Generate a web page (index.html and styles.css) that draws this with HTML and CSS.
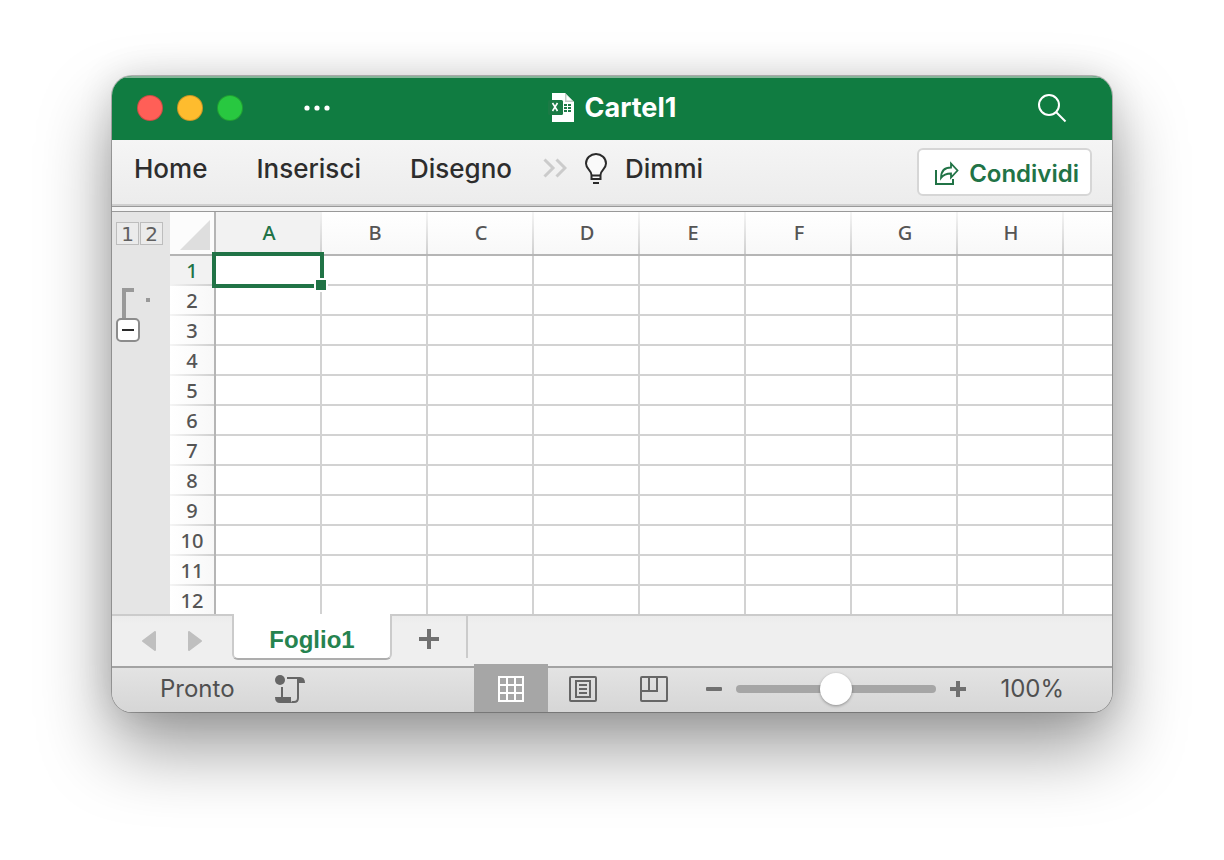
FILE: index.html
```html
<!DOCTYPE html>
<html lang="it">
<head>
    <meta charset="UTF-8">
    <meta name="viewport" content="width=device-width, initial-scale=1.0">
    <title>Cartel1</title>
    <link rel="stylesheet" href="styles.css">
</head>
<body>

<div class="window">

    <header class="titlebar">
        <div class="title-left">
            <button class="light red" aria-label="Chiudi"></button>
            <button class="light yellow" aria-label="Riduci"></button>
            <button class="light green" aria-label="Ingrandisci"></button>
            <button class="more" aria-label="Altro">
                <svg width="26" height="6" viewBox="0 0 26 6" fill="#fff"><circle cx="3" cy="3" r="2.6"/><circle cx="13" cy="3" r="2.6"/><circle cx="23" cy="3" r="2.6"/></svg>
            </button>
        </div>
        <h1 class="title">
            <svg width="28" height="30" viewBox="0 0 28 30">
                <path d="M4 0h13l9 9v20H4z" fill="#fff"/>
                <path d="M17 0v9h9z" fill="#c3cbc6"/>
                <path d="M18.500 2v5.500H24z" fill="#fff"/>
                <path d="M16 11h3v2h-3zM20 11h3v2h-3zM16 14h3v2h-3zM20 14h3v2h-3zM16 17h3v2h-3zM20 17h3v2h-3z" fill="#1f7a48"/>
                <rect x="0" y="7" width="15" height="15" rx="1.500" fill="#1b7a45"/>
                <path d="M4.500 10l5 8M9.500 10l-5 8" stroke="#fff" stroke-width="1.600" fill="none"/>
            </svg>
            Cartel1
        </h1>
        <button class="search" aria-label="Cerca">
            <svg width="30" height="30" viewBox="0 0 30 30" fill="none" stroke="#fff" stroke-width="2"><circle cx="12" cy="12" r="10"/><path d="M19 19l9.500 9.500"/></svg>
        </button>
    </header>

    <nav class="ribbon">
        <a href="#">Home</a>
        <a href="#">Inserisci</a>
        <a href="#">Disegno</a>
        <button class="overflow" aria-label="Altre schede">
            <svg width="24" height="20" viewBox="0 0 24 20" fill="none" stroke="#cbcbcb" stroke-width="3"><path d="M1.500 1.500l8.500 8.500-8.500 8.500M13.500 1.500L22 10l-8.500 8.500"/></svg>
        </button>
        <a href="#" class="tell-me">
            <svg width="22" height="32" viewBox="0 0 22 32" fill="none" stroke="#2b2b2b" stroke-width="2">
                <path d="M6.500 22c0-5-5.500-6-5.500-11.500a10 9.500 0 0 1 20 0C21 16 15.500 17 15.500 22v4h-9z" fill="#fafafa"/>
                <path d="M6.500 22.500h9M8 30h6"/>
            </svg>
            Dimmi
        </a>
        <button class="share">
            <svg width="26" height="26" viewBox="0 0 26 26" fill="none" stroke="#217346" stroke-width="2">
                <path d="M2 9v14h17v-5"/>
                <path d="M7 17c0-7 4-10.500 10-10.500V2.500l6.500 7-6.500 7v-4c-4.500 0-7.500 1-10 4.500z" stroke-width="1.800"/>
            </svg>
            Condividi
        </button>
    </nav>

    <main class="workbook">
        <aside class="outline">
            <div class="levels">
                <button>1</button>
                <button>2</button>
            </div>
            <div class="group">
                <span class="bracket"></span>
                <span class="dot"></span>
            </div>
            <button class="collapse" aria-label="Comprimi gruppo"><svg width="12" height="2" viewBox="0 0 12 2"><path d="M0 0h12v2H0z" fill="#2b2b2b"/></svg></button>
        </aside>
        <div class="sheet">
            <table>
                <thead>
                    <tr>
                        <th class="corner"><svg width="30" height="30" viewBox="0 0 30 30"><path d="M30 0v30H0z" fill="#dedede"/></svg></th>
                        <th class="active">A</th><th>B</th><th>C</th><th>D</th><th>E</th><th>F</th><th>G</th><th>H</th><th class="rest"></th>
                    </tr>
                </thead>
                <tbody>
                    <tr><th class="active">1</th><td class="selected"><span class="cursor"></span></td><td></td><td></td><td></td><td></td><td></td><td></td><td></td><td></td></tr>
                    <tr><th>2</th><td></td><td></td><td></td><td></td><td></td><td></td><td></td><td></td><td></td></tr>
                    <tr><th>3</th><td></td><td></td><td></td><td></td><td></td><td></td><td></td><td></td><td></td></tr>
                    <tr><th>4</th><td></td><td></td><td></td><td></td><td></td><td></td><td></td><td></td><td></td></tr>
                    <tr><th>5</th><td></td><td></td><td></td><td></td><td></td><td></td><td></td><td></td><td></td></tr>
                    <tr><th>6</th><td></td><td></td><td></td><td></td><td></td><td></td><td></td><td></td><td></td></tr>
                    <tr><th>7</th><td></td><td></td><td></td><td></td><td></td><td></td><td></td><td></td><td></td></tr>
                    <tr><th>8</th><td></td><td></td><td></td><td></td><td></td><td></td><td></td><td></td><td></td></tr>
                    <tr><th>9</th><td></td><td></td><td></td><td></td><td></td><td></td><td></td><td></td><td></td></tr>
                    <tr><th>10</th><td></td><td></td><td></td><td></td><td></td><td></td><td></td><td></td><td></td></tr>
                    <tr><th>11</th><td></td><td></td><td></td><td></td><td></td><td></td><td></td><td></td><td></td></tr>
                    <tr><th>12</th><td></td><td></td><td></td><td></td><td></td><td></td><td></td><td></td><td></td></tr>
                </tbody>
            </table>
        </div>
    </main>

    <div class="tabs">
        <button class="arrow" aria-label="Foglio precedente"><svg width="14" height="20" viewBox="0 0 14 20"><path d="M13 1v18L1 10z" fill="#bfbfbf" stroke="#bfbfbf" stroke-width="2" stroke-linejoin="round"/></svg></button>
        <button class="arrow" aria-label="Foglio successivo"><svg width="14" height="20" viewBox="0 0 14 20"><path d="M1 1v18l12-9z" fill="#bfbfbf" stroke="#bfbfbf" stroke-width="2" stroke-linejoin="round"/></svg></button>
        <button class="tab">Foglio1</button>
        <button class="add" aria-label="Nuovo foglio"><svg width="20" height="20" viewBox="0 0 20 20"><path d="M8 0h4v8h8v4h-8v8H8v-8H0V8h8z" fill="#707070"/></svg></button>
    </div>

    <footer class="status">
        <span class="ready">Pronto</span>
        <button class="macro" aria-label="Registra macro">
            <svg width="30" height="28" viewBox="0 0 30 28" fill="#666">
                <circle cx="5" cy="5" r="5"/>
                <path d="M6 12h2v11H6z"/>
                <path d="M0 22h16v3q0 3 3 3H5q-5 0-5-6z"/>
                <path d="M12 2h13q5 0 5 6h-6V4H12z"/>
                <path d="M23 4v19q0 4-4 4h-2" fill="none" stroke="#666" stroke-width="2"/>
            </svg>
        </button>
        <div class="views">
            <button class="current" aria-label="Normale">
                <svg width="26" height="26" viewBox="0 0 26 26"><path d="M1 1h24v24H1zM9 1v24M17 1v24M1 9h24M1 17h24" fill="none" stroke="#fff" stroke-width="2"/></svg>
            </button>
            <button aria-label="Layout di pagina">
                <svg width="28" height="26" viewBox="0 0 28 26" fill="none" stroke="#666" stroke-width="2"><rect x="1" y="1" width="26" height="24" rx="1"/><path d="M7 5h14v16H7zM10 9h8M10 13h8M10 17h8"/></svg>
            </button>
            <button aria-label="Anteprima interruzioni">
                <svg width="28" height="26" viewBox="0 0 28 26" fill="none" stroke="#666" stroke-width="2"><rect x="1" y="1" width="26" height="24" rx="1"/><path d="M9 1v14M17 1v14H1"/></svg>
            </button>
        </div>
        <div class="zoom">
            <button aria-label="Riduci zoom"><svg width="16" height="16" viewBox="0 0 16 16"><rect y="6" width="16" height="4" rx="1" fill="#707070"/></svg></button>
            <input type="range" min="0" max="200" value="100" aria-label="Zoom">
            <button aria-label="Aumenta zoom"><svg width="16" height="16" viewBox="0 0 16 16"><path d="M6 0h4v6h6v4h-6v6H6v-6H0V6h6z" fill="#707070"/></svg></button>
            <span class="percent">100%</span>
        </div>
    </footer>

</div>

</body>
</html>
```

FILE: styles.css
```css
* {box-sizing: border-box;}
body {
    margin: 0;
    min-height: 100vh;
    padding: 76px 112px;
    background: #fff;
    font-family: Inter, "Liberation Sans", sans-serif;
    color: #2d2d2d;
}
button {
    margin: 0;
    padding: 0;
    border: 0;
    background: none;
    font: inherit;
    color: inherit;
}
svg {display: block; flex: none;}
a {color: inherit; text-decoration: none;}

.window {
    border-radius: 20px;
    overflow: hidden;
    background: #efefef;
    box-shadow: 0 0 0 1px rgba(0,0,0,.25), 0 36px 72px rgba(0,0,0,.4), 0 0 36px rgba(0,0,0,.12);
}

/* title bar */
.titlebar {
    display: grid;
    grid-template-columns: 1fr auto 1fr;
    align-items: center;
    height: 64px;
    padding: 0 26px 2px;
    border-top: 2px solid #86b599;
    background: #107c41;
}
.title-left {display: flex; align-items: center; gap: 16px;}
.light {width: 26px; height: 26px; margin: 0 -1px; border-radius: 50%; border: 1px solid rgba(0,0,0,.2);}
.red {background: #ff5f57;}
.yellow {background: #febc2e;}
.green {background: #28c840;}
.more {margin-left: 46px;}
.title {
    display: flex;
    align-items: center;
    gap: 9px;
    margin: 0;
    font-size: 27px;
    line-height: 32px;
    font-weight: 700;
    color: #fff;
}
.search {justify-self: end; margin-right: 19px;}

/* ribbon */
.ribbon {
    display: flex;
    align-items: flex-start;
    height: 72px;
    padding: 8px 20px 0 22px;
    border-bottom: 1px solid #999;
    background: linear-gradient(#cfcfcf 0 2px, #999 2px 3px, #f5f5f5 3px) 0 100% / 100% 7px no-repeat, linear-gradient(#f5f5f5, #ebebeb);
    font-size: 26px;
    line-height: 42px;
    font-weight: 500;
}
.ribbon a {margin-right: 49px;}
.overflow {margin: 10px 18px 0 -18px;}
.ribbon .tell-me {display: flex; align-items: center; gap: 18px; margin-right: auto;}
.share {
    display: flex;
    align-items: center;
    gap: 9px;
    height: 48px;
    padding: 3px 11px 0 15px;
    border: 2px solid #d6d6d6;
    border-radius: 6px;
    background: #fff;
    color: #217346;
    font-size: 24px;
    font-weight: 600;
}

/* grid */
.workbook {display: flex; height: 402px; background: #fff;}
.outline {flex: none; width: 58px; padding: 10px 4px; background: #e5e5e5;}
.levels {display: flex; gap: 1px;}
.levels button {
    width: 23px;
    height: 23px;
    border: 1px solid #bdbdbd;
    background: #ebebeb;
    color: #606060;
    font: 20px/20px "DejaVu Sans", sans-serif;
}
.group {display: flex; gap: 12px; margin: 43px 0 0 6px;}
.bracket {width: 12px; height: 30px; border: solid #999; border-width: 4px 0 0 4px;}
.dot {width: 4px; height: 4px; margin-top: 10px; background: #999;}
.collapse {
    display: flex;
    align-items: center;
    justify-content: center;
    width: 24px;
    height: 24px;
    border: 2px solid #8c8c8c;
    border-radius: 5px;
    background: #fff;
}
.sheet {flex: 1; min-width: 0; overflow: hidden;}
.sheet table {width: 100%; table-layout: fixed; border-collapse: separate; border-spacing: 0;}
.sheet th {
    padding: 0;
    font: 500 20px/28px "Noto Sans", sans-serif;
    color: #555;
}
.sheet thead th {
    width: 106px;
    height: 44px;
    border-bottom: 2px solid #b5b5b5;
    background: linear-gradient(#f5f5f5, #cfcfcf) 100% 0 / 2px 100% no-repeat, linear-gradient(#fff, #f8f8f8);
}
.sheet thead .corner {width: 46px; padding: 4px 0 0 10px; border-right: 2px solid #b5b5b5; background: #fcfcfc;}
.sheet thead .rest {width: auto; background: linear-gradient(#fff, #f8f8f8);}
.sheet tbody th {
    height: 30px;
    border-right: 2px solid #b5b5b5;
    background: linear-gradient(90deg, #f5f5f5, #cfcfcf) 0 100% / 100% 2px no-repeat, linear-gradient(90deg, #fff, #f8f8f8);
}
.sheet td {height: 30px; padding: 0; border: solid #d2d2d2; border-width: 0 2px 2px 0;}
.sheet td:last-child {border-right: 0;}
.sheet thead .active, .sheet tbody .active {color: #217346;}
.sheet thead .active {background: linear-gradient(#f2f2f2, #cfcfcf) 100% 0 / 2px 100% no-repeat, #f2f2f2;}
.sheet tbody .active {background: linear-gradient(90deg, #f2f2f2, #cfcfcf) 0 100% / 100% 2px no-repeat, #f2f2f2;}
.selected {position: relative;}
.cursor {position: absolute; inset: -4px; border: 4px solid #217346;}
.cursor::after {
    content: "";
    position: absolute;
    right: -8px;
    bottom: -8px;
    width: 10px;
    height: 10px;
    border: 2px solid #fff;
    background: #217346;
}

/* sheet tabs */
.tabs {
    display: flex;
    align-items: flex-start;
    height: 52px;
    padding-left: 30px;
    border-top: 2px solid #cbcbcb;
    background: linear-gradient(#ebebeb, #efefef 8px);
}
.arrow {margin: 15px 32px 0 0;}
.tab {
    width: 160px;
    height: 46px;
    margin: -2px 0 0 -2px;
    padding-top: 8px;
    border: 2px solid #cbcbcb;
    border-top: 0;
    border-bottom-color: #adadad;
    border-radius: 0 0 6px 6px;
    background: #fff;
    color: #26834f;
    font: bold 24px/32px "Liberation Sans", sans-serif;
}
.add {
    display: flex;
    align-items: center;
    justify-content: center;
    width: 76px;
    height: 42px;
    padding-top: 4px;
    border-right: 2px solid #cbcbcb;
}

/* status bar */
.status {
    display: flex;
    align-items: center;
    height: 46px;
    padding: 0 48px 2px;
    border-top: 2px solid #a3a3a3;
    background: linear-gradient(#e3e3e3, #d6d6d6);
    color: #505050;
    font-size: 24px;
    line-height: 32px;
}
.macro {margin-left: 40px;}
.views {display: flex; align-items: center; align-self: flex-start; gap: 43px; margin: -4px 0 0 auto;}
.views button {padding-top: 2px;}
.views button:nth-child(2) {margin-left: -22px;}
.views .current {
    display: flex;
    align-items: center;
    justify-content: center;
    width: 74px;
    height: 48px;
    background: #a6a6a6;
}
.zoom {display: flex; align-items: center; gap: 14px; margin-left: 38px;}
.zoom input {
    appearance: none;
    width: 200px;
    height: 32px;
    margin: 0;
    background: none;
}
.zoom input::-webkit-slider-runnable-track {
    height: 8px;
    border-radius: 4px;
    background: #a6a6a6;
}
.zoom input::-webkit-slider-thumb {
    appearance: none;
    width: 32px;
    height: 32px;
    margin-top: -12px;
    border-radius: 50%;
    background: #fff;
    box-shadow: 0 1px 3px rgba(0,0,0,.35);
}
.percent {margin-left: 20px;}
```
